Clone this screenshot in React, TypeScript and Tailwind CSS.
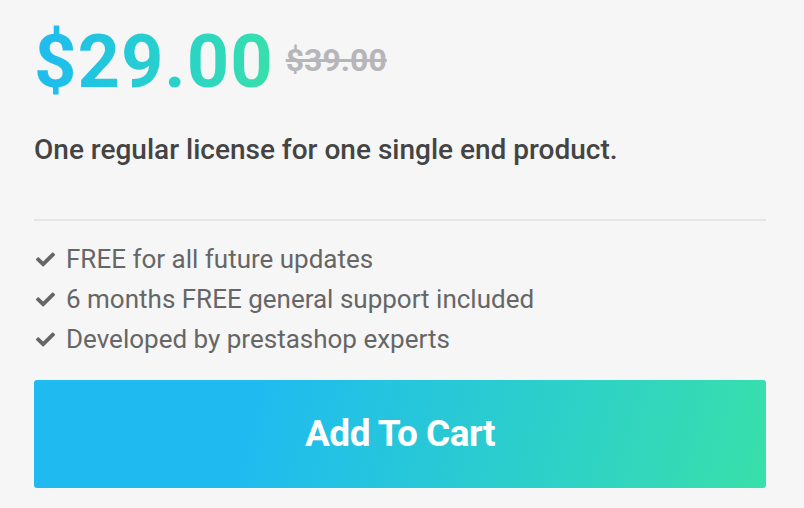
import React from 'react';

const features = [
  'FREE for all future updates',
  '6 months FREE general support included',
  'Developed by prestashop experts',
];

const Check = () => (
  <svg viewBox="0 0 512 512" className="ml-[2px] w-[19px] h-[19px] fill-[#666]" aria-hidden>
    <path d="M173.9 439.4l-166.4-166.4c-10-10-10-26.2 0-36.2l36.2-36.2c10-10 26.2-10 36.2 0L192 312.7 432.1 72.6c10-10 26.2-10 36.2 0l36.2 36.2c10 10 10 26.2 0 36.2L210.1 439.4c-10 10-26.2 10-36.2 0z" />
  </svg>
);

export default function App() {
  return (
    <div className="w-[804px] h-[508px] bg-[#f6f6f6] font-['Roboto',sans-serif] px-[34px] pt-[14px]">
      {/* price */}
      <div className="flex items-start gap-[12px]">
        <span className="text-[74px] leading-[96px] font-bold tracking-[1px] bg-gradient-to-r from-[#1fbbf0] to-[#38e0aa] bg-clip-text text-transparent">
          $29.00
        </span>
        <span className="mt-[26px] text-[32px] leading-[40px] font-bold text-[#b6b6ba] line-through">$39.00</span>
      </div>

      <p className="mt-[24px] text-[28px] leading-[32px] font-medium text-[#444]">
        One regular license for one single end product.
      </p>

      <div className="mt-[53px] h-[2px] bg-[#e6e6e6] w-[732px]" />

      <ul className="mt-[18px]">
        {features.map((f) => (
          <li key={f} className="flex items-center gap-[11px] h-[40px] text-[26px] text-[#666]">
            <Check />
            <span>{f}</span>
          </li>
        ))}
      </ul>

      <button className="mt-[21px] w-[732px] h-[108px] rounded-[3px] bg-[linear-gradient(105deg,#1fbbf0_30%,#38e0aa_100%)] text-white text-[37px] font-bold tracking-[-0.5px]">
        Add To Cart
      </button>
    </div>
  );
}
